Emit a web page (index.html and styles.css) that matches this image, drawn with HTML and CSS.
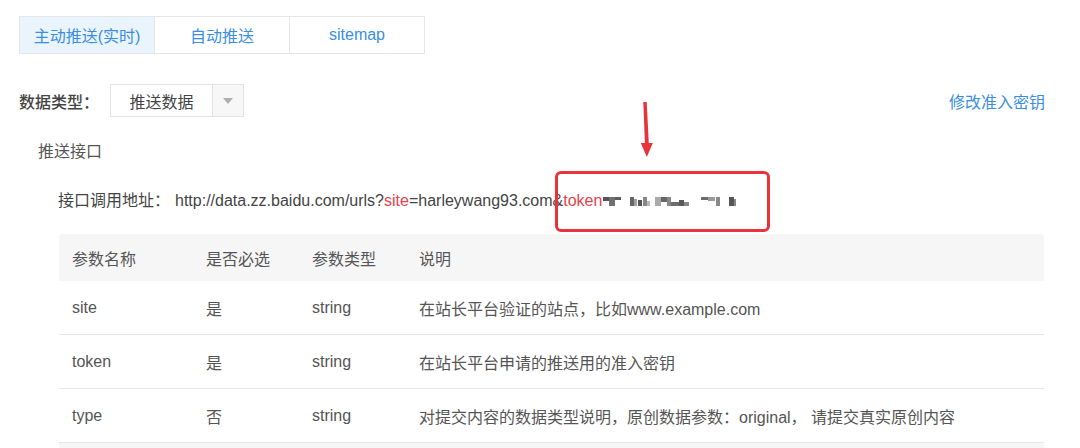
FILE: index.html
```html
<!DOCTYPE html>
<html lang="zh-CN">
<head>
<meta charset="utf-8">
<title>主动推送</title>
<link rel="stylesheet" href="styles.css">
</head>
<body>
<div class="page">
  <div class="tabs">
    <div class="tab active">主动推送(实时)</div>
    <div class="tab">自动推送</div>
    <div class="tab">sitemap</div>
  </div>

  <div class="type-row">
    <span class="type-label">数据类型：</span>
    <div class="select">
      <span class="select-value">推送数据</span>
      <span class="select-arrow"><span class="tri"></span></span>
    </div>
    <a class="modify-link">修改准入密钥</a>
  </div>

  <div class="section-title">推送接口</div>

  <div class="url-row">
    <span class="url-label">接口调用地址：</span>
    <span class="url">http://data.zz.baidu.com/urls?<span class="hl">site</span>=harleywang93.com&amp;<span class="hl">token</span></span><svg class="blur" width="150" height="9" viewBox="0 0 150 9">
        <rect x="0" y="0" width="6" height="4" fill="#555"/>
        <rect x="6" y="0" width="6" height="9" fill="#707070"/>
        <rect x="12" y="0" width="6" height="3" fill="#5e5e5e"/>
        <rect x="27" y="0" width="4" height="9" fill="#666"/>
        <rect x="31" y="2" width="3" height="7" fill="#a0a0a0"/>
        <rect x="35" y="3" width="4" height="6" fill="#555"/>
        <rect x="40" y="0" width="4" height="9" fill="#888"/>
        <rect x="44" y="4" width="3" height="5" fill="#b8b8b8"/>
        <rect x="52" y="0" width="6" height="9" fill="#aaa"/>
        <rect x="58" y="0" width="6" height="5" fill="#666"/>
        <rect x="64" y="0" width="4" height="9" fill="#888"/>
        <rect x="68" y="5" width="8" height="4" fill="#6c6c6c"/>
        <rect x="76" y="3" width="5" height="6" fill="#5a5a5a"/>
        <rect x="81" y="5" width="5" height="4" fill="#888"/>
        <rect x="98" y="0" width="7" height="3" fill="#6c6c6c"/>
        <rect x="105" y="0" width="7" height="4" fill="#999"/>
        <rect x="113" y="0" width="4" height="9" fill="#888"/>
        <rect x="126" y="0" width="5" height="9" fill="#555"/>
        <rect x="131" y="2" width="2" height="7" fill="#888"/>
      </svg>
  </div>

  <div class="table">
    <div class="tr th">
      <div class="td">参数名称</div>
      <div class="td">是否必选</div>
      <div class="td">参数类型</div>
      <div class="td">说明</div>
    </div>
    <div class="tr">
      <div class="td">site</div>
      <div class="td">是</div>
      <div class="td">string</div>
      <div class="td">在站长平台验证的站点，比如www.example.com</div>
    </div>
    <div class="tr">
      <div class="td">token</div>
      <div class="td">是</div>
      <div class="td">string</div>
      <div class="td">在站长平台申请的推送用的准入密钥</div>
    </div>
    <div class="tr">
      <div class="td">type</div>
      <div class="td">否</div>
      <div class="td">string</div>
      <div class="td">对提交内容的数据类型说明，原创数据参数：original， 请提交真实原创内容</div>
    </div>
    <div class="tr tail"></div>
  </div>

  <div class="mark-box"></div>
  <svg class="mark-arrow" width="24" height="60" viewBox="0 0 24 60">
    <path d="M5.3 2 L8.7 2 L10.8 43 L14.8 43 L8.8 57 L2.8 43 L6.9 43 Z" fill="#e8323c"/>
  </svg>
</div>
</body>
</html>
```

FILE: styles.css
```css
* { box-sizing: border-box; }
html, body { margin: 0; padding: 0; background: #fff; }
body {
  font-family: "Liberation Sans", "Noto Sans CJK SC", sans-serif;
  font-size: 16px;
  color: #555;
}
.page {
  position: relative;
  width: 1080px;
  height: 448px;
  overflow: hidden;
  padding: 16px 35px 0 19px;
}
.tabs {
  display: flex;
  height: 38px;
}
.tab {
  width: 136px;
  border: 1px solid #e6e6e6;
  margin-left: -1px;
  display: flex;
  align-items: center;
  justify-content: center;
  color: #3a8ee2;
  background: #fff;
}
.tab:first-child { margin-left: 0; }
.tab.active { background: #eaf4fd; }

.type-row {
  display: flex;
  align-items: center;
  height: 33px;
  margin-top: 30px;
}
.type-label {
  width: 91px;
  font-weight: 500;
  color: #444;
}
.select {
  display: flex;
  height: 33px;
  width: 134px;
  border: 1px solid #e3e3e3;
}
.select-value {
  width: 101px;
  display: flex;
  align-items: center;
  justify-content: center;
  color: #444;
}
.select-arrow {
  flex: 1;
  border-left: 1px solid #e3e3e3;
  background: #f7f7f7;
  display: flex;
  align-items: center;
  justify-content: center;
}
.tri {
  width: 0; height: 0;
  border-left: 5px solid transparent;
  border-right: 5px solid transparent;
  border-top: 6px solid #b0b0b0;
}
.modify-link {
  margin-left: auto;
  color: #3a8ee2;
  text-decoration: none;
  cursor: pointer;
}

.section-title {
  margin-top: 23px;
  padding-left: 19px;
  line-height: 24px;
}

.url-row {
  margin-top: 25px;
  padding-left: 39px;
  line-height: 24px;
  color: #444;
  display: flex;
  align-items: center;
  white-space: nowrap;
}
.url-label { width: 117px; flex-shrink: 0; }
.url { flex-shrink: 0; }
.hl { color: #e5434c; }
.blur {
  display: block;
  flex-shrink: 0;
  width: 150px;
  height: 9px;
  margin-left: 1px;
  margin-top: 1px;
}

.table {
  margin-top: 21px;
  margin-left: 40px;
  width: 985px;
}
.tr {
  display: grid;
  grid-template-columns: 134px 106px 107px 1fr;
  height: 54px;
  border-bottom: 1px solid #e6e6e6;
  align-items: center;
}
.tr.th {
  height: 47px;
  background: #f6f6f7;
  border-bottom: none;
  border-radius: 3px 3px 0 0;
}
.td {
  padding-left: 13px;
  white-space: nowrap;
}
.tr.tail {
  background: #f6f6f7;
  border-bottom: none;
}

.mark-box {
  position: absolute;
  left: 555px;
  top: 171px;
  width: 215px;
  height: 61px;
  border: 3px solid #e8333c;
  border-radius: 6px;
}
.mark-arrow {
  position: absolute;
  left: 638px;
  top: 100px;
}
```
